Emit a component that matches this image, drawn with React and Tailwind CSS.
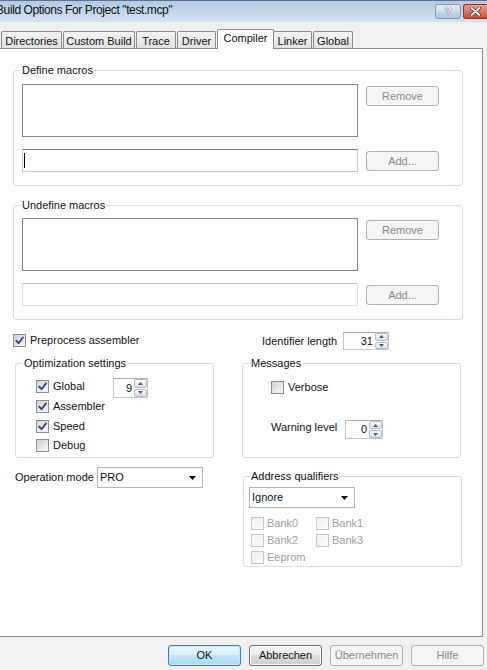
import React from "react";

function Check({ checked = false, disabled = false, className = "" }) {
  const box = disabled
    ? "border-[#c5c8cb] bg-[linear-gradient(135deg,#f0f0f0,#fbfbfb)]"
    : "border-[#8e8f8f] bg-[linear-gradient(135deg,#d3d3d3,#f6f6f6)]";
  return (
    <span className={"w-[13px] h-[13px] shrink-0 border flex items-center justify-center " + box + " " + className}>
      {checked && (
        <svg width="11" height="11" viewBox="0 0 11 11">
          <path d="M2.2 5.6 L4.6 8.2 L9 2.4" fill="none" stroke="#2f4479" strokeWidth="1.8" strokeLinecap="round" strokeLinejoin="round" />
        </svg>
      )}
    </span>
  );
}

function Spin({ value, className = "" }) {
  return (
    <div className={"flex bg-white border border-[#c2c6cc] border-t-[#abadb3] " + className}>
      <span className="flex-1 self-center text-right pr-[2px]">{value}</span>
      <div className="w-[13px] flex flex-col gap-[1px]">
        <div className="flex-1 border border-[#b7bcc6] rounded-[2px] bg-[linear-gradient(to_bottom,#f6f8fa,#dbe2ea)] flex items-center justify-center">
          <svg width="5" height="3" viewBox="0 0 5 3"><path d="M0 3 L2.5 0 L5 3Z" fill="#4d6185" /></svg>
        </div>
        <div className="flex-1 border border-[#b7bcc6] rounded-[2px] bg-[linear-gradient(to_bottom,#f6f8fa,#dbe2ea)] flex items-center justify-center">
          <svg width="5" height="3" viewBox="0 0 5 3"><path d="M0 0 L2.5 3 L5 0Z" fill="#4d6185" /></svg>
        </div>
      </div>
    </div>
  );
}

function Select({ value, className = "" }) {
  return (
    <div className={"flex items-center h-[21px] w-[106px] bg-white border border-[#abb8c6] pl-[2px] " + className}>
      <span className="flex-1">{value}</span>
      <svg width="7" height="4" viewBox="0 0 7 4" className="mr-[6px]"><path d="M0 0 L7 0 L3.5 4Z" fill="#000" /></svg>
    </div>
  );
}

function DisBtn({ children, className = "" }) {
  return (
    <div className={"w-[73px] h-[20px] shrink-0 border border-[#adb2b5] rounded-[3px] bg-[#f4f4f4] text-[#8a8a8a] flex items-center justify-center " + className}>
      {children}
    </div>
  );
}

function MacroGroup({ title, focused, className = "" }) {
  return (
    <div className={"relative w-[450px] border border-[#d5dfe5] rounded-[3px] pl-[8px] pb-[13px] " + className}>
      <span className="absolute left-[7px] top-[-7px] bg-white px-[1px]">{title}</span>
      <div className="flex gap-[8px] items-start">
        <div className="w-[336px] h-[53px] border border-[#828790] bg-white" />
        <DisBtn className="mt-[2px]">Remove</DisBtn>
      </div>
      <div className="flex gap-[8px] items-start mt-[12px]">
        {focused ? (
          <div className="w-[336px] h-[23px] border border-[#b5cfe7] border-t-[#5b7ea3] bg-white flex items-center pl-[1px]">
            <span className="w-[1px] h-[15px] bg-black" />
          </div>
        ) : (
          <div className="w-[336px] h-[23px] border border-[#dbdfe6] border-t-[#b9bcc2] bg-white" />
        )}
        <DisBtn className="mt-[2px]">Add...</DisBtn>
      </div>
    </div>
  );
}

function Tab({ children, w, selected = false }) {
  if (selected) {
    return (
      <div className={"h-[20px] border border-b-0 border-[#898c95] bg-white rounded-t-[2px] flex justify-center pt-[2px] ml-[1px] relative z-20 " + w}>
        {children}
      </div>
    );
  }
  return (
    <div className={"h-[17px] mb-[1px] border border-b-0 border-[#898c95] bg-[linear-gradient(to_bottom,#f3f3f3,#e2e2e2)] rounded-t-[2px] flex justify-center pt-[3px] " + w}>
      {children}
    </div>
  );
}

export default function App() {
  return (
    <div className="w-[487px] h-[670px] overflow-hidden bg-[#f0f0f0] flex flex-col font-['Liberation_Sans',Arial,sans-serif] text-[11px] leading-[13px] text-[#111]">
      {/* Title bar */}
      <div className="h-[22px] shrink-0 flex items-start border-t border-[#5b7290] bg-[linear-gradient(to_bottom,#b2cae3,#d4e2f1)]">
        <span className="ml-[-4px] mt-[2px] text-[12px] leading-[15px] tracking-[-0.4px] whitespace-nowrap">Build Options For Project "test.mcp"</span>
        <div className="ml-auto mt-[3px] flex gap-[2px]">
          <div className="w-[26px] h-[15px] rounded-[3px] border border-[#8797ab] bg-[linear-gradient(to_bottom,#e4ecf5,#b5c8dd)] flex items-center justify-center text-[11px] font-bold text-white [text-shadow:0_0_1px_#44546a,0_0_1px_#44546a]">
            ?
          </div>
          <div className="w-[24px] h-[15px] rounded-l-[3px] border border-r-0 border-[#86372b] bg-[linear-gradient(to_bottom,#e9a193,#c4503b)] flex items-center justify-center">
            <svg width="11" height="9" viewBox="0 0 11 9">
              <path d="M1.5 1 L9.5 8 M9.5 1 L1.5 8" stroke="#5a1e14" strokeWidth="3.2" strokeLinecap="round" />
              <path d="M1.5 1 L9.5 8 M9.5 1 L1.5 8" stroke="#ffffff" strokeWidth="1.8" strokeLinecap="round" />
            </svg>
          </div>
        </div>
      </div>

      {/* Tabs */}
      <div className="h-[20px] mt-[7px] mb-[-1px] flex items-end relative z-10 pl-[1px] shrink-0">
        <Tab w="w-[61px]">Directories</Tab>
        <div className="w-[1px]" />
        <Tab w="w-[72px]">Custom Build</Tab>
        <div className="w-[1px]" />
        <Tab w="w-[40px]">Trace</Tab>
        <div className="w-[1px]" />
        <Tab w="w-[39px]">Driver</Tab>
        <Tab w="w-[57px]" selected>Compiler</Tab>
        <div className="ml-[-1px]" />
        <Tab w="w-[39px]">Linker</Tab>
        <div className="w-[1px]" />
        <Tab w="w-[40px]">Global</Tab>
      </div>

      {/* Panel */}
      <div className="ml-[-1px] w-[484px] h-[589px] shrink-0 border border-[#898c95] bg-white flex flex-col pl-[13px]">
        <MacroGroup title="Define macros" focused className="mt-[21px] pt-[13px]" />
        <MacroGroup title="Undefine macros" className="mt-[19px] pt-[12px]" />

        {/* Row A */}
        <div className="flex mt-[12px] h-[18px]">
          <div className="w-[229px] flex items-start">
            <Check checked className="mt-[2px]" />
            <span className="ml-[4px] mt-[2px]">Preprocess assembler</span>
          </div>
          <div className="flex items-center pl-[20px]">
            <span className="w-[81px]">Identifier length</span>
            <Spin value="31" className="w-[46px] h-[18px]" />
          </div>
        </div>

        {/* Row B */}
        <div className="flex mt-[13px] items-start">
          <div className="w-[229px]">
            <div className="relative ml-[2px] w-[199px] h-[95px] border border-[#d5dfe5] rounded-[3px] pl-[20px] flex flex-col">
              <span className="absolute left-[7px] top-[-7px] bg-white px-[1px]">Optimization settings</span>
              <div className="flex items-start h-[13px] mt-[16px]">
                <div className="w-[77px] flex items-start">
                  <Check checked />
                  <span className="ml-[4px]">Global</span>
                </div>
                <Spin value="9" className="w-[35px] h-[20px] mt-[-2px]" />
              </div>
              <div className="flex items-start h-[13px] mt-[7px]">
                <Check checked />
                <span className="ml-[4px]">Assembler</span>
              </div>
              <div className="flex items-start h-[13px] mt-[7px]">
                <Check checked />
                <span className="ml-[4px]">Speed</span>
              </div>
              <div className="flex items-start h-[13px] mt-[6px]">
                <Check />
                <span className="ml-[4px]">Debug</span>
              </div>
            </div>
          </div>
          <div className="relative w-[219px] h-[95px] border border-[#d5dfe5] rounded-[3px] pl-[28px] flex flex-col">
            <span className="absolute left-[7px] top-[-7px] bg-white px-[1px]">Messages</span>
            <div className="flex items-start h-[13px] mt-[17px]">
              <Check />
              <span className="ml-[4px]">Verbose</span>
            </div>
            <div className="flex items-start mt-[26px]">
              <span className="w-[74px] mt-[1px]">Warning level</span>
              <Spin value="0" className="w-[38px] h-[19px]" />
            </div>
          </div>
        </div>

        {/* Row C */}
        <div className="flex mt-[9px] items-start">
          <div className="w-[229px] flex items-center pl-[2px]">
            <span className="w-[82px]">Operation mode</span>
            <Select value="PRO" className="border-[#a7bdd3]" />
          </div>
          <div className="relative mt-[9px] ml-[1px] w-[219px] h-[91px] border border-[#d5dfe5] rounded-[3px] flex flex-col">
            <span className="absolute left-[6px] top-[-7px] bg-white px-[1px]">Address qualifiers</span>
            <Select value="Ignore" className="mt-[10px] ml-[5px] border-[#a9a9a9]" />
            <div className="mt-[9px] ml-[7px] grid grid-cols-[65px_80px] gap-y-[4px] text-[#a0a0a0]">
              <div className="flex items-start h-[13px]"><Check disabled /><span className="ml-[3px]">Bank0</span></div>
              <div className="flex items-start h-[13px]"><Check disabled /><span className="ml-[3px]">Bank1</span></div>
              <div className="flex items-start h-[13px]"><Check disabled /><span className="ml-[3px]">Bank2</span></div>
              <div className="flex items-start h-[13px]"><Check disabled /><span className="ml-[3px]">Bank3</span></div>
              <div className="flex items-start h-[13px]"><Check disabled /><span className="ml-[3px]">Eeprom</span></div>
            </div>
          </div>
        </div>
      </div>

      {/* Bottom buttons */}
      <div className="flex justify-end gap-[8px] pr-[3px] mt-[8px]">
        <div className="w-[73px] h-[21px] border border-[#3c7fb1] rounded-[3px] bg-[linear-gradient(to_bottom,#eaf6fd_0%,#d9f0fc_50%,#bee6fd_50%,#a7d9f5_100%)] flex items-center justify-center shadow-[inset_0_0_0_1px_#c7e7fa]">
          OK
        </div>
        <div className="w-[73px] h-[21px] border border-[#707070] rounded-[3px] bg-[linear-gradient(to_bottom,#f2f2f2_0%,#ebebeb_50%,#dddddd_50%,#cfcfcf_100%)] flex items-center justify-center shadow-[inset_0_0_0_1px_#fbfbfb]">
          Abbrechen
        </div>
        <div className="w-[73px] h-[21px] border border-[#adb2b5] rounded-[3px] bg-[#f4f4f4] text-[#8a8a8a] flex items-center justify-center">
          Übernehmen
        </div>
        <div className="w-[73px] h-[21px] border border-[#adb2b5] rounded-[3px] bg-[#f4f4f4] text-[#8a8a8a] flex items-center justify-center">
          Hilfe
        </div>
      </div>
    </div>
  );
}
